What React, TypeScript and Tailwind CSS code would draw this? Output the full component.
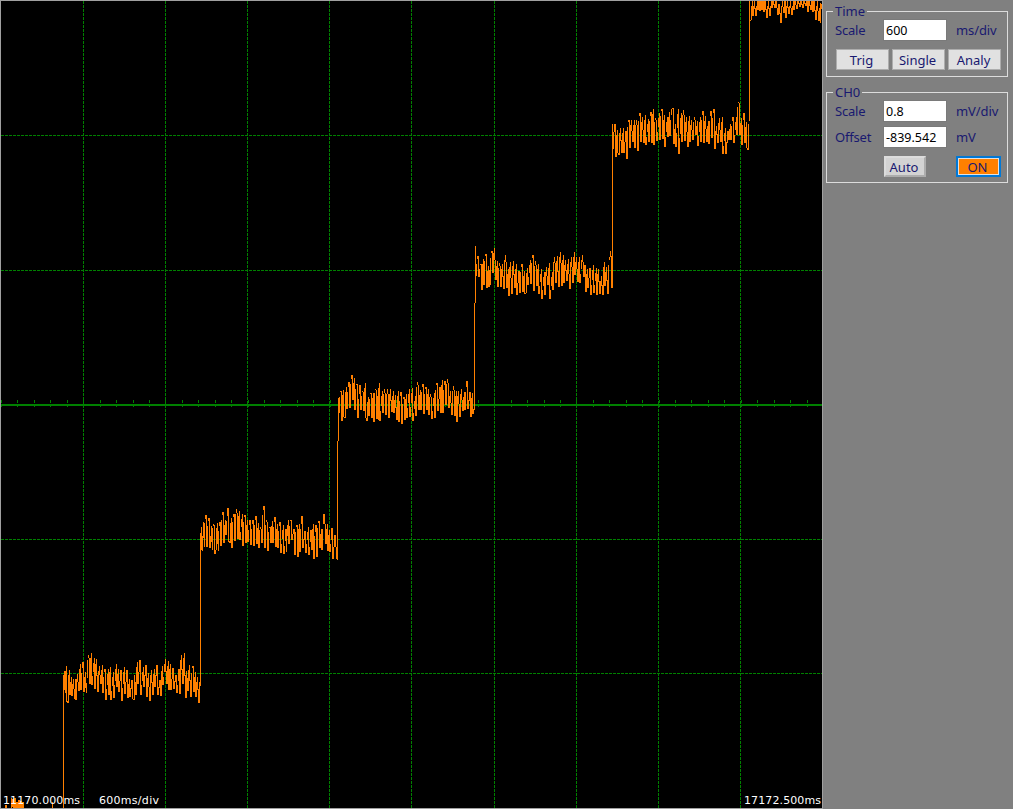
const font = "font-['Noto_Sans','Liberation_Sans',sans-serif]";

// Every trace lists x,y pairs in thirds of a pixel, from its own corner of the screen.
const traces = [
  {
    x: 0,
    y: 640,
    points:
      "16,507 19,495 22,507",
  },
  {
    x: 0,
    y: 640,
    points:
      "34,507 34,474 37,500 40,478 43,507 46,475 49,507 52,488 55,505 58,480 61,507 64,484 67,505 70,486 71,507",
  },
  {
    x: 0,
    y: 640,
    points: "157,507 157,488 160,507",
  },
  {
    x: 0,
    y: 640,
    points:
      "190,507 190,105 194,150 194,93 197,158 199,78 202,185 205,188 208,90 211,165 214,111 217,167 220,117 226,178 226,117 229,180 232,102 238,152 241,72 244,150 247,85 250,66 253,155 256,96 260,160 265,45 268,55 271,132 274,39 277,135 283,54 286,146 289,57 295,156 298,78 304,132 307,75 310,160 313,96 316,87 319,180 325,87 328,165 331,81 334,180 340,96 343,173 349,72 352,140 355,87 358,156 364,90 367,182 373,81 376,162 382,92 385,174 388,117 391,172 397,120 400,178 403,180 403,90 409,165 412,66 415,132 421,60 424,164 430,81 433,140 439,75 442,170 445,100 451,182 454,90 460,165 463,87 466,140 472,75 475,165 481,120 484,168 487,78 490,135 496,57 502,132 505,63 508,150 511,72 514,150 520,84 523,146 529,105 532,158 538,87 541,161 544,45 550,132 553,39 559,174 559,80 565,152 568,75 574,170 577,84 580,78 583,155 586,96 589,170 592,111 598,188 598,111 601,135",
  },
  {
    x: 190,
    y: 490,
    points:
      "31,585 31,130 34,180 34,111 38,183 41,96 44,170 44,94 49,75 52,172 53,100 58,85 61,173 65,108 68,180 68,99 74,108 76,192 79,180 82,99 86,183 86,117 91,96 94,168 97,75 100,66 103,158 106,90 109,135 112,78 115,54 118,155 121,158 124,84 127,173 130,81 133,72 136,152 139,57 142,70 145,148 148,64 151,150 157,72 160,168 163,81 167,76 169,160 172,90 175,155 178,105 181,90 184,165 187,102 190,90 193,168 196,90 199,78 202,161 205,99 208,173 208,105 214,117 217,158 220,60 223,48 226,174 229,90 232,96 235,182 238,111 241,111 244,158 247,93 250,158 253,96 256,81 259,172 262,102 265,173 268,108 271,96 274,190 280,105 283,191 289,117 289,185 295,90 298,162 298,98 304,90 307,149 313,117 316,195 319,111 322,105 325,200 328,102 331,185 334,102 337,78 340,174 346,123 349,188 355,111 358,194 364,120 367,179 370,102 373,207 376,125 379,105 382,200 385,99 388,93 391,174 394,117 397,180 400,102 403,72 406,102 409,162 412,102 415,184 418,120 421,185 427,114 430,207 436,135 442,207",
  },
  {
    x: 325,
    y: 365,
    points:
      "37,582 37,228 40,228 40,99 43,144 46,81 49,78 52,168 55,75 58,156 61,159 61,81 64,66 67,132 70,66 73,51 76,129 79,42 82,30 85,106 88,39 91,135 91,57 97,57 100,159 103,87 106,60 109,135 112,78 115,81 118,138 121,54 124,159 127,168 130,96 133,153 136,87 139,85 142,160 145,84 148,171 148,69 154,75 157,162 160,78 160,165 163,54 166,168 172,78 175,144 178,72 181,84 184,150 187,72 190,87 193,159 196,72 202,141 205,78 208,144 211,90 217,165 220,78 223,171 226,93 229,81 232,177 235,102 238,96 241,165 244,87 247,158 253,72 256,156 262,69 265,168 271,93 274,153 277,51 280,60 283,136 286,75 289,135 292,66 295,57 298,147 301,72 304,66 307,135 310,72 313,150 313,81 319,96 322,162 328,84 331,159 334,60 337,54 340,138 346,66 349,144 352,45 355,144 358,60 361,48 364,120 367,42 370,54 373,129 376,78 382,150 385,63 388,75 391,153 394,78 397,171 400,78 406,156 409,72 415,138 418,81 421,135 424,66 427,48 430,132 436,81 439,156 442,84 445,147 448,132",
  },
  {
    x: 465,
    y: 235,
    points:
      "28,522 28,204 31,204 31,33 34,123 37,72 40,63 43,126 46,87 49,87 52,165 55,72 58,150 61,63 64,57 67,159 70,93 73,156 73,90 76,150 79,54 82,48 85,114 88,39 91,75 94,135 97,78 100,156 103,84 106,93 109,155 112,87 118,162 121,60 124,81 127,158 130,102 133,183 136,81 142,177 145,78 151,159 154,87 157,180 163,108 166,174 169,96 172,87 175,171 178,108 181,177 184,174 187,99 190,150 196,75 199,147 202,69 205,60 208,168 211,78 214,90 217,153 220,87 223,177 229,102 232,192 238,111 241,180 244,96 250,150 253,84 256,192 262,111 265,165 268,66 271,84 274,144 277,63 283,156 286,51 289,84 292,153 295,60 298,144 301,75 307,138 310,72 316,162 319,66 322,96 325,144 328,51 331,120 334,66 340,140 343,66 346,144 352,60 355,81 358,126 361,90 364,171 367,102 370,159 376,99 379,180 385,90 388,174 394,99 397,180 400,102 406,177 409,123 415,180 418,81 421,153 424,96 430,177 433,75 436,66 438,159 439,48 442,48",
  },
  {
    x: 600,
    y: 90,
    points:
      "37,594 37,102 40,177 43,126 46,102 49,201 52,120 55,189 58,195 61,114 67,189 70,114 73,189 79,123 82,207 85,96 88,90 91,174 94,90 100,156 103,90 106,174 109,90 112,105 115,183 118,78 121,69 124,156 127,81 133,159 133,96 136,75 139,165 145,87 148,156 151,78 154,66 157,159 160,57 163,165 163,81 169,90 172,153 178,69 181,150 184,63 187,57 190,147 193,75 196,171 202,81 205,141 208,66 211,138 214,75 217,57 220,54 223,162 226,102 229,171 235,57 238,192 244,69 247,156 250,60 253,75 256,153 259,81 265,171 268,78 271,156 274,90 280,150 283,81 286,90 289,135 292,93 295,168 301,81 304,156 307,75 310,63 313,159 316,78 322,156 325,93 328,162 331,78 334,63 337,144 340,69 343,57 346,177 349,108 355,159 358,84 364,156 367,81 370,192 376,114 379,192 385,123 388,150 391,102 394,150 397,93 400,81 403,159 409,81 412,135 415,36 418,39 421,135 424,84 427,165 430,90 433,69 436,159 439,96 442,174 445,180 445,87 448,90",
  },
  {
    x: 730,
    y: 0,
    points:
      "58,360 58,3 61,60 64,60 67,3 70,48 73,3 79,48 82,3 85,30 88,3 91,33 94,3 97,30 100,3 103,36 106,3 112,54 115,3 121,48 124,3 127,24 130,3 136,24 139,3 145,45 148,12 154,69 157,3 163,39 166,3 169,54 172,3 178,42 181,3 187,45 190,3 193,30 196,3 202,27 205,3 211,20 214,3 220,24 223,3 229,18 232,3 235,36 238,3 244,30 247,3 250,36 253,3 259,60 262,3 268,63 271,9 271,69 275,12",
  },
];

// Draws one vertical bar per pixel column, from its own sample to the next column's.
function tracePath(x0: number, y0: number, data: string) {
  const pts = data.split(" ").map((p) => p.split(",").map(Number));
  const first = Math.floor(pts[0][0] / 3);
  const last = Math.floor(pts[pts.length - 1][0] / 3);
  let d = "";
  for (let col = first; col <= last; col++) {
    const from = col * 3;
    const ys = pts.filter(([x]) => x >= from && x < from + 3).map(([, y]) => y);
    for (let i = 1; i < pts.length; i++) {
      const [ax, ay] = pts[i - 1];
      const [bx, by] = pts[i];
      for (const edge of [from + 1, from + 4]) {
        if (ax < edge && bx >= edge) ys.push(ay + ((by - ay) * (edge - ax)) / (bx - ax));
      }
    }
    const top = Math.floor(Math.min(...ys) / 3);
    const bottom = Math.max(top + 1, Math.round(Math.max(...ys) / 3));
    // falling edges stop short of the sample that the next column draws
    const gap = bottom - top > 12 && col > first + 1 && ys[0] > ys[ys.length - 1] ? 5 : 0;
    d += `M${x0 + col + 0.5} ${y0 + top + gap}V${y0 + bottom}`;
  }
  return d;
}

const columns = [83, 165, 247, 329, 411, 494, 576, 658, 740];
const rows = [135, 270, 539, 673];
const ticks = Array.from({ length: 50 }, (_, i) => Math.round(1 + i * 16.44));

function Scope() {
  return (
    <svg width={823} height={809} className="block shrink-0 bg-black" shapeRendering="crispEdges">
      <g stroke="#008000" fill="none">
        {columns.map((x) => (
          <line key={x} x1={x + 0.5} x2={x + 0.5} y1={1} y2={808} strokeDasharray="3 1" />
        ))}
        {rows.map((y) => (
          <line key={y} x1={1} x2={822} y1={y + 0.5} y2={y + 0.5} strokeDasharray="3 1" />
        ))}
        {ticks.map((x) => (
          <path key={x} d={`M${x + 0.5} 400v3m0 3v1`} />
        ))}
        <line x1={1} x2={822} y1={405} y2={405} strokeWidth={2} />
      </g>
      <g stroke="#ff8000" fill="none">
        {traces.map((t, i) => (
          <path key={i} d={tracePath(t.x, t.y, t.points)} />
        ))}
      </g>
      <g fill="white" className="font-['DejaVu_Sans',sans-serif] text-[11px]">
        <text x={3} y={804} textLength={77}>11170.000ms</text>
        <text x={99} y={804} textLength={60}>600ms/div</text>
        <text x={744} y={804} textLength={77}>17172.500ms</text>
      </g>
      <rect x={0.5} y={0.5} width={822} height={808} fill="none" stroke="#a0a0a0" />
    </svg>
  );
}

function Group({ title, className, children }: { title: string; className: string; children: React.ReactNode }) {
  return (
    <section className={`relative border border-[#dcdcdc] ${className}`}>
      <h2 className="absolute -top-[10px] left-[6px] bg-[#808080] px-[2px] leading-[18px]">{title}</h2>
      {children}
    </section>
  );
}

function Field({ label, value, unit }: { label: string; value: string; unit: string }) {
  return (
    <div className="flex h-[22px] items-center">
      <span className="w-[49px] pt-[2px] pl-px tracking-[-0.2px]">{label}</span>
      <input
        defaultValue={value}
        className="h-[22px] w-[64px] border border-[#7a7a7a] bg-white pl-[2px] text-[12.5px] text-black outline-none"
      />
      <span className="pt-[2px] pl-[9px] tracking-[-0.1px]">{unit}</span>
    </div>
  );
}

function Button({ label, className }: { label: string; className: string }) {
  return (
    <button className={`flex h-[21px] items-center justify-center pr-[2px] ${className}`}>
      <span className="leading-none">{label}</span>
    </button>
  );
}

const plain = "w-[53px] border border-[#adadad] bg-[#e1e1e1] pt-px";

export default function App() {
  return (
    <div className="flex h-[809px] w-[1013px] overflow-hidden bg-[#808080]">
      <Scope />
      <aside className={`flex flex-col pt-[11px] pl-[3px] text-[13px] text-[#191970] ${font}`}>
        <Group title="Time" className="h-[66px] w-[182px] pt-[7px] pl-[7px]">
          <Field label="Scale" value="600" unit="ms/div" />
          <div className="mt-[8px] ml-[2px] flex gap-[3px]">
            <Button label="Trig" className={plain} />
            <Button label="Single" className={plain} />
            <Button label="Analy" className={plain} />
          </div>
        </Group>
        <Group title="CH0" className="mt-[15px] h-[91px] w-[182px] pt-[7px] pl-[7px]">
          <Field label="Scale" value="0.8" unit="mV/div" />
          <div className="mt-[4px]">
            <Field label="Offset" value="-839.542" unit="mV" />
          </div>
          <div className="mt-[8px] ml-[50px] flex gap-[30px]">
            <Button label="Auto" className="w-[42px] border-2 border-t-[#dcdcdc] border-r-[#adadad] border-b-[#adadad] border-l-[#dcdcdc] bg-[#d3d3d3] pt-px" />
            <Button label="ON" className="w-[45px] border-2 border-[#0078d7] bg-[#ff8000] pt-px inset-ring inset-ring-[#e1e1e1]" />
          </div>
        </Group>
      </aside>
    </div>
  );
}
